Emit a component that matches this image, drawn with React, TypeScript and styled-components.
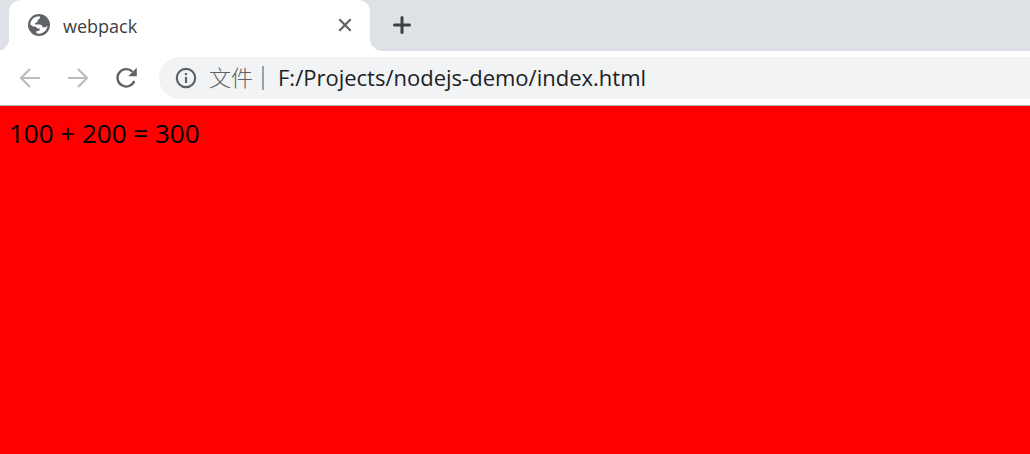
import React from "react";
import styled, { createGlobalStyle } from "styled-components";

const GlobalStyle = createGlobalStyle`
  * { box-sizing: border-box; }
  body { margin: 0; background: #ff0000; }
  button { border: 0; padding: 0; background: none; font: inherit; color: inherit; }
`;

const Browser = styled.div`
  display: flex;
  flex-direction: column;
  min-height: 100vh;
  font-family: "Open Sans", "Noto Sans CJK SC", sans-serif;
`;

const TabStrip = styled.header`
  display: flex;
  align-items: stretch;
  height: 51px;
  padding-left: 9px;
  background: #dee1e6;
`;

const Tab = styled.div`
  position: relative;
  display: flex;
  align-items: center;
  width: 361px;
  padding: 0 16px 2px 18px;
  border-radius: 12px 12px 0 0;
  background: #fff;
  color: #3c4043;

  &::before,
  &::after {
    content: "";
    position: absolute;
    bottom: 0;
    width: 12px;
    height: 12px;
  }
  &::before {
    right: 100%;
    background: radial-gradient(circle at 0 0, transparent 12px, #fff 12px);
  }
  &::after {
    left: 100%;
    background: radial-gradient(circle at 100% 0, transparent 12px, #fff 12px);
  }
`;

const TabTitle = styled.span`
  flex: 1;
  padding: 2px 0 0 12px;
  font-size: 18px;
  line-height: 24px;
`;

const IconButton = styled.button<{ $size: number; $color: string }>`
  display: flex;
  align-items: center;
  justify-content: center;
  width: ${(p) => p.$size}px;
  height: ${(p) => p.$size}px;
  color: ${(p) => p.$color};
`;

const NewTab = styled(IconButton)`
  align-self: center;
  margin: 0 0 2px 19px;
`;

const Toolbar = styled.nav`
  display: flex;
  align-items: center;
  gap: 24px;
  height: 55px;
  padding-left: 18px;
  border-bottom: 1px solid #b6b4b6;
  background: #fff;
`;

const AddressBar = styled.form`
  flex: 1;
  display: flex;
  align-items: center;
  height: 42px;
  margin-left: -3px;
  padding-left: 16px;
  border-radius: 21px 0 0 21px;
  background: #f1f3f4;
  color: #5f6368;
`;

const Scheme = styled.label`
  margin-left: 12px;
  padding: 0 9px 4px 0;
  border-right: 2px solid #9aa0a6;
  font-family: "Noto Sans CJK SC", sans-serif;
  font-weight: 300;
  font-size: 22px;
  line-height: 20px;
`;

const Address = styled.input`
  flex: 1;
  min-width: 0;
  padding: 0 0 2px 14px;
  border: 0;
  outline: 0;
  background: none;
  color: #202124;
  font-family: inherit;
  font-size: 22px;
  line-height: 30px;
`;

const Page = styled.main`
  flex: 1;
  padding: 11px 9px;
  background: #ff0000;
  color: #000;
  font-family: "Open Sans", sans-serif;
  font-size: 26px;
  line-height: 32px;
`;

const stroke = { fill: "none", stroke: "currentColor" };

const Globe = () => (
  <svg width="24" height="24" viewBox="0 0 24 24" fill="none" aria-hidden="true">
    <circle cx="12" cy="12" r="11" fill="#5f6368" />
    <path
      fill="#fff"
      d="M3.300 11.500C3.400 7.600 6.400 4.300 10.200 3.500L13 3.400V5L10.500 7.500V9L8 10.200V11.500H12.500C14.500 11.500 15.500 12.800 15.500 14.200H18.500L20.500 12.800C20 17.300 16.400 20.700 12 20.700L9.500 20.300V18H12L13 15.500H10.500L8.500 13.500H6Z"
    />
  </svg>
);

const Close = () => (
  <svg width="18" height="18" viewBox="0 0 18 18" {...stroke} strokeWidth="2.2" aria-hidden="true">
    <path d="M3.300 3.300L14.700 14.700M14.700 3.300L3.300 14.700" />
  </svg>
);

const Plus = () => (
  <svg width="24" height="24" viewBox="0 0 24 24" {...stroke} strokeWidth="3" strokeLinecap="round" aria-hidden="true">
    <path d="M13 4.500V19.500M5.500 12H20.500" />
  </svg>
);

const Arrow = ({ forward = false }: { forward?: boolean }) => (
  <svg width="24" height="24" viewBox="0 0 24 24" {...stroke} strokeWidth="2.2" aria-hidden="true">
    <path d={forward ? "M2 12H21M12 3L21 12L12 21" : "M22 12H3M12 3L3 12L12 21"} />
  </svg>
);

const Reload = () => (
  <svg width="24" height="24" viewBox="0 0 24 24" {...stroke} strokeWidth="2.300" aria-hidden="true">
    <path d="M20.300 15A8.700 8.700 0 1 1 18.500 5.800" />
    <path d="M22.800 1.800V10.200H14.200Z" fill="currentColor" stroke="none" />
  </svg>
);

const Info = () => (
  <svg width="22" height="22" viewBox="0 0 22 22" {...stroke} strokeWidth="2.200" aria-hidden="true">
    <circle cx="11" cy="11" r="9.200" />
    <path d="M11 10V16M11 6V8.200" />
  </svg>
);

export default function App() {
  return (
    <Browser>
      <GlobalStyle />
      <TabStrip>
        <Tab>
          <Globe />
          <TabTitle>webpack</TabTitle>
          <IconButton $size={18} $color="#5f6368" aria-label="Close tab">
            <Close />
          </IconButton>
        </Tab>
        <NewTab $size={24} $color="#3c4043" aria-label="New tab">
          <Plus />
        </NewTab>
      </TabStrip>
      <Toolbar>
        <IconButton $size={24} $color="#babcbe" aria-label="Back">
          <Arrow />
        </IconButton>
        <IconButton $size={24} $color="#babcbe" aria-label="Forward">
          <Arrow forward />
        </IconButton>
        <IconButton $size={24} $color="#5f6368" aria-label="Reload">
          <Reload />
        </IconButton>
        <AddressBar onSubmit={(e) => e.preventDefault()}>
          <Info />
          <Scheme htmlFor="address">文件</Scheme>
          <Address id="address" defaultValue="F:/Projects/nodejs-demo/index.html" spellCheck={false} />
        </AddressBar>
      </Toolbar>
      <Page>100 + 200 = 300</Page>
    </Browser>
  );
}
